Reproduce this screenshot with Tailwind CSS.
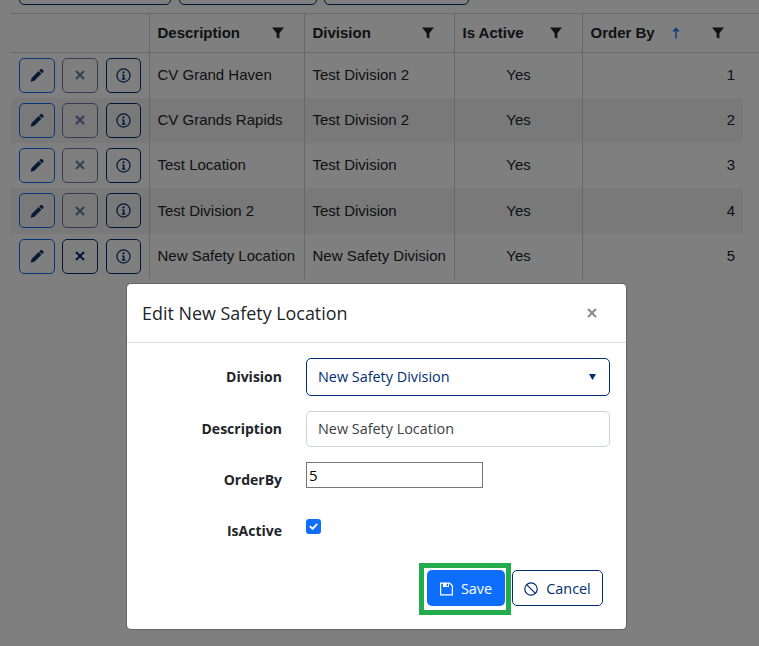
<!DOCTYPE html>
<html lang="en">
<head>
    <meta charset="UTF-8">
    <meta name="viewport" content="width=device-width, initial-scale=1.0">
    <title>Safety Locations</title>
    <script src="https://cdn.jsdelivr.net/npm/@tailwindcss/browser@4"></script>
</head>
<body class="relative h-[646px] w-[759px] overflow-hidden bg-white font-['Liberation_Sans',sans-serif] text-[#212529]">
    <!-- Toolbar, scrolled mostly out of view -->
    <div class="-mt-[30px] flex h-[35px] pl-[19px]">
        <div class="h-[35px] w-[152px] rounded-[5px] border border-[#002d72]"></div>
        <div class="ml-[8px] h-[35px] w-[138px] rounded-[5px] border border-[#002d72]"></div>
        <div class="ml-[7px] h-[35px] w-[145px] rounded-[5px] border border-[#002d72]"></div>
    </div>

    <!-- Grid -->
    <table class="ml-[11px] mt-[8px] w-[748px] table-fixed border-collapse text-[15px]">
        <colgroup>
            <col class="w-[138.5px]"><col class="w-[155px]"><col class="w-[150px]"><col class="w-[128px]"><col class="w-[160.5px]"><col class="w-[16px]">
        </colgroup>
        <thead>
            <tr class="h-[39px] border-y border-[#d0d0d0] font-bold">
                <th class="border-r border-[#d0d0d0]"></th>
                <th class="border-r border-[#d0d0d0] pl-[7.5px] pr-2 text-left">
                    <div class="flex items-center justify-between pr-[12px]">Description
                        <svg class="h-[12px] w-[12px]" viewBox="0 0 12 12"><path fill="#212529" d="M0 .5h12L7.4 6.2V11.8L4.6 10.2v-4z"/></svg>
                    </div>
                </th>
                <th class="border-r border-[#d0d0d0] pl-[7.5px] pr-2 text-left">
                    <div class="flex items-center justify-between pr-[12px]">Division
                        <svg class="h-[12px] w-[12px]" viewBox="0 0 12 12"><path fill="#212529" d="M0 .5h12L7.4 6.2V11.8L4.6 10.2v-4z"/></svg>
                    </div>
                </th>
                <th class="border-r border-[#d0d0d0] pl-[7.5px] pr-2 text-left">
                    <div class="flex items-center justify-between pr-[12px]">Is Active
                        <svg class="h-[12px] w-[12px]" viewBox="0 0 12 12"><path fill="#212529" d="M0 .5h12L7.4 6.2V11.8L4.6 10.2v-4z"/></svg>
                    </div>
                </th>
                <th class="pl-[7.5px] pr-2 text-left">
                    <div class="flex items-center pr-[11px]">Order By
                        <svg class="ml-[17px] h-[12px] w-[8px]" viewBox="0 0 8 12"><path fill="none" stroke="#0d6efd" stroke-width="1.4" d="M4 11.5V1.5M1.2 4.5 4 1.5l2.8 3"/></svg>
                        <svg class="ml-auto h-[12px] w-[12px]" viewBox="0 0 12 12"><path fill="#212529" d="M0 .5h12L7.4 6.2V11.8L4.6 10.2v-4z"/></svg>
                    </div>
                </th>
                <th></th>
            </tr>
        </thead>
        <tbody id="rows"></tbody>
    </table>

    <!-- Backdrop -->
    <div class="absolute inset-0 bg-black/50"></div>

    <!-- Edit dialog -->
    <div class="absolute left-[126px] top-[283px] h-[347px] w-[501px] rounded-[5px] border border-black/20 bg-white bg-clip-padding font-['Open_Sans',sans-serif]">
        <div class="flex h-[59px] items-center justify-between border-b border-[#dee2e6] pl-[15px] pr-[29px]">
            <h5 class="text-[17.9px] text-[#212529]">Edit New Safety Location</h5>
            <svg class="h-[10px] w-[10px]" viewBox="0 0 10 10"><path stroke="#8a8a8a" stroke-width="2" d="M1 1l8 8M9 1l-8 8"/></svg>
        </div>
        <div class="grid grid-cols-[155px_304px] gap-x-[24px] pt-[15px] text-[14.4px]">
            <label class="flex h-[38px] items-center justify-end pb-[2px] text-[14px] font-bold">Division</label>
            <div class="flex h-[38px] items-center justify-between rounded-[5px] border border-[#002d72] pl-[11px] pr-[13px] text-[#002d72]">
                New Safety Division
                <svg class="h-[6px] w-[7px]" viewBox="0 0 7 6"><path fill="#002d72" d="M0 0h7L3.5 6z"/></svg>
            </div>
            <label class="mt-[15px] flex h-[36px] items-center justify-end pb-[2px] text-[14px] font-bold">Description</label>
            <div class="mt-[15px] flex h-[36px] items-center rounded-[5px] border border-[#ced4da] pl-[11px] text-[#3b4046]">New Safety Location</div>
            <label class="mt-[16px] flex h-[34px] items-center justify-end pb-[2px] text-[14px] font-bold">OrderBy</label>
            <div class="mt-[15px] flex h-[26px] w-[177px] items-center border border-[#767676] pl-[2px] text-[15px] text-black">5</div>
            <label class="mt-[17px] flex h-[34px] items-center justify-end pb-[2px] text-[14px] font-bold">IsActive</label>
            <div class="mt-[22px] flex h-[15px] w-[15px] items-center justify-center rounded-[3px] bg-[#0d6efd]">
                <svg class="h-[9px] w-[9px]" viewBox="0 0 10 10"><path fill="none" stroke="#fff" stroke-width="2" stroke-linecap="round" stroke-linejoin="round" d="M1.5 5.2 4 7.7l4.6-5"/></svg>
            </div>
        </div>
        <div class="absolute left-[292px] top-[279px] flex items-start text-[14.4px]">
            <div class="flex border-[5px] border-[#22ac4c] pb-[4px] pl-[3px] pr-[1px] pt-[2px]">
                <button class="flex h-[36px] w-[78px] items-center justify-center gap-[8px] rounded-[5px] bg-[#0d6efd] pt-[1px] text-white">
                    <svg class="h-[14px] w-[13px]" viewBox="0 0 13 14"><path fill="none" stroke="#fff" stroke-width="1.2" d="M.6 1.1h9l2.8 2.7v9.1H.6z"/><path fill="#fff" d="M3 1h6v4H3z"/><path fill="#0d6efd" d="M6.6 1.8h1.5v2.4H6.6z"/></svg>
                    Save
                </button>
            </div>
            <button class="ml-[1px] mt-[7px] flex h-[36px] w-[91px] items-center justify-center gap-[8px] rounded-[5px] border border-[#002d72] pt-[1px] text-[#002d72]">
                <svg class="h-[14px] w-[14px]" viewBox="0 0 14 14"><circle cx="7" cy="7" r="6.2" fill="none" stroke="#002d72" stroke-width="1.2"/><path stroke="#002d72" stroke-width="1.2" d="M2.6 2.6l8.8 8.8"/></svg>
                Cancel
            </button>
        </div>
    </div>

    <script>
        // Rows for the grid
        const rows = [
            ['CV Grand Haven', 'Test Division 2', 1],
            ['CV Grands Rapids', 'Test Division 2', 2],
            ['Test Location', 'Test Division', 3],
            ['Test Division 2', 'Test Division', 4],
            ['New Safety Location', 'New Safety Division', 5]
        ];
        const pencil = '<svg class="h-[14px] w-[14px]" viewBox="0 0 14 14"><path fill="#0f3570" d="M10.4 1.2a1.2 1.2 0 0 1 1.7 0l1.1 1.1a1.2 1.2 0 0 1 0 1.7L12 5.2 9.2 2.4zM8.6 3l2.8 2.8-7 7-3.8 1 1-3.8z"/></svg>';
        const info = '<svg class="h-[15px] w-[15px]" viewBox="0 0 16 16"><circle cx="8" cy="8" r="7" fill="none" stroke="#002d72" stroke-width="1.3"/><circle cx="8" cy="4.6" r="1.2" fill="#002d72"/><path fill="#002d72" d="M6.4 6.8H9v4.4h1v1.2H6.2v-1.2h1.1V8H6.4z"/></svg>';
        const html = rows.map((r, i) => {
            const stripe = i % 2 ? 'bg-black/5' : '';
            const xOpacity = i === 4 ? '' : 'opacity-60';
            const rowHeight = i === 3 ? 'h-[46px]' : 'h-[45px]';
            const nudge = i === 3 ? 'pt-[1px]' : '';
            return `<tr class="${rowHeight}">
                <td class="border-r border-[#d0d0d0] pl-[8px] ${stripe}"><div class="flex gap-[7px]">
                    <button class="flex h-[35px] w-[36px] items-center justify-center rounded-[5px] border border-[#0d6efd]">${pencil}</button>
                    <button class="flex h-[35px] w-[36px] items-center justify-center rounded-[5px] border border-[#002d72] ${xOpacity}"><svg class="h-[10px] w-[10px]" viewBox="0 0 10 10"><path stroke="#002d72" stroke-width="2" d="M1 1l8 8M9 1l-8 8"/></svg></button>
                    <button class="ml-[1px] flex h-[35px] w-[35px] items-center justify-center rounded-[5px] border border-[#002d72]">${info}</button>
                </div></td>
                <td class="border-r border-[#d0d0d0] pl-[7.5px] pr-2 whitespace-nowrap ${stripe} ${nudge}">${r[0]}</td>
                <td class="border-r border-[#d0d0d0] pl-[7.5px] pr-2 whitespace-nowrap ${stripe} ${nudge}">${r[1]}</td>
                <td class="border-r border-[#d0d0d0] px-2 text-center ${stripe} ${nudge}">Yes</td>
                <td class="px-2 text-right ${stripe} ${nudge}">${r[2]}</td>
                <td></td>
            </tr>`;
        }).join('');
        document.getElementById('rows').innerHTML = html;
    </script>
</body>
</html>
